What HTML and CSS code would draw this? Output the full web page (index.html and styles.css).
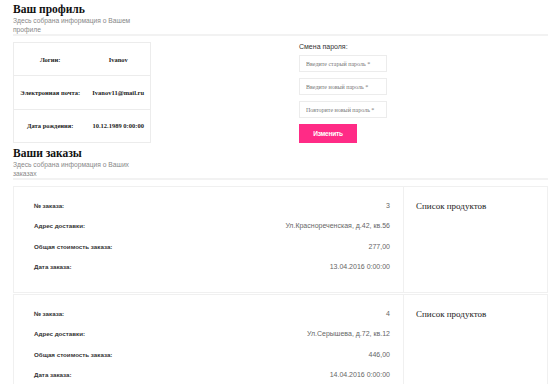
FILE: index.html
```html
<!DOCTYPE html>
<html lang="ru">
<head>
    <meta charset="UTF-8">
    <title>Личный кабинет</title>
    <link rel="stylesheet" href="styles.css">
</head>
<body>
    <div class="container">
        <div class="section-head">
            <h2>Ваш профиль</h2>
            <p class="sub">Здесь собрана информация о Вашем профиле</p>
        </div>
        <div class="profile">
            <table class="info">
                <tr><th>Логин:</th><td>Ivanov</td></tr>
                <tr><th>Электронная почта:</th><td>Ivanov11@mail.ru</td></tr>
                <tr><th>Дата рождения:</th><td>10.12.1989 0:00:00</td></tr>
            </table>
            <form class="pass">
                <label>Смена пароля:</label>
                <input type="password" placeholder="Введите старый пароль *">
                <input type="password" placeholder="Введите новый пароль *">
                <input type="password" placeholder="Повторите новый пароль *">
                <button type="button">Изменить</button>
            </form>
        </div>

        <div class="section-head">
            <h2>Ваши заказы</h2>
            <p class="sub">Здесь собрана информация о Ваших заказах</p>
        </div>

        <div class="order">
            <div class="order-info">
                <div class="row"><span class="key">№ заказа:</span><span class="val">3</span></div>
                <div class="row"><span class="key">Адрес доставки:</span><span class="val">Ул.Краснореченская, д.42, кв.56</span></div>
                <div class="row"><span class="key">Общая стоимость заказа:</span><span class="val">277,00</span></div>
                <div class="row"><span class="key">Дата заказа:</span><span class="val">13.04.2016 0:00:00</span></div>
            </div>
            <div class="products">Список продуктов</div>
        </div>
        <div class="order">
            <div class="order-info">
                <div class="row"><span class="key">№ заказа:</span><span class="val">4</span></div>
                <div class="row"><span class="key">Адрес доставки:</span><span class="val">Ул.Серышева, д.72, кв.12</span></div>
                <div class="row"><span class="key">Общая стоимость заказа:</span><span class="val">446,00</span></div>
                <div class="row"><span class="key">Дата заказа:</span><span class="val">14.04.2016 0:00:00</span></div>
            </div>
            <div class="products">Список продуктов</div>
        </div>
    </div>
</body>
</html>
```

FILE: styles.css
```css
body {
    margin: 0;
    font-family: "Liberation Sans", Arial, sans-serif;
    color: #333;
    background: #fff;
}
.container {
    width: 535px;
    margin: 0 0 0 13px;
}
.section-head {
    border-bottom: 2px solid #f2f2f2;
}
h2 {
    font-family: "Liberation Serif", "Times New Roman", serif;
    font-size: 11.5px;
    font-weight: bold;
    color: #111;
    margin: 0;
    padding-top: 2px;
    line-height: 14px;
}
.sub {
    margin: 0;
    width: 130px;
    font-size: 6.7px;
    line-height: 9px;
    color: #888;
}
.profile {
    display: grid;
    grid-template-columns: 286px 1fr;
    padding-top: 6px;
}
.info {
    width: 138px;
    border-collapse: collapse;
    border: 1px solid #ececec;
    font-family: "Liberation Serif", "Times New Roman", serif;
    font-size: 6.5px;
    font-weight: bold;
    color: #222;
}
.info th, .info td {
    height: 31px;
    padding: 0 3px;
    text-align: center;
    border-bottom: 1px solid #ececec;
    white-space: nowrap;
}
.pass {
    display: flex;
    flex-direction: column;
    align-items: flex-start;
    padding-top: 1px;
}
.pass label {
    font-size: 7px;
    color: #333;
    margin-bottom: 5px;
}
.pass input {
    width: 88px;
    height: 17px;
    box-sizing: border-box;
    border: 1px solid #ececec;
    margin: 0 0 6px;
    padding: 0 6px;
    font-family: "Liberation Serif", "Times New Roman", serif;
    font-size: 6px;
}
.pass input::placeholder {
    color: #777;
}
.pass button {
    margin-top: 0;
    width: 58px;
    height: 19px;
    border: 0;
    background: #ff2b86;
    color: #fff;
    font-family: "Liberation Sans", Arial, sans-serif;
    font-size: 6.5px;
    font-weight: bold;
    letter-spacing: -0.2px;
}
.profile + .section-head h2 {
    padding-top: 3px;
}
.section-head + .order {
    margin-top: 6px;
}
.order {
    display: grid;
    grid-template-columns: 390px 1fr;
    border: 1px solid #f0f0f0;
    margin-bottom: 1px;
}
.order-info {
    padding: 8px 13px 15px 20px;
    border-right: 1px solid #f0f0f0;
}
.row {
    display: flex;
    justify-content: space-between;
    height: 20.5px;
    align-items: center;
}
.key {
    font-size: 6.2px;
    font-weight: bold;
    color: #333;
}
.val {
    font-size: 7px;
    color: #666;
}
.products {
    padding: 14px 0 0 12px;
    font-family: "Liberation Serif", "Times New Roman", serif;
    font-size: 9px;
    color: #222;
}
```
